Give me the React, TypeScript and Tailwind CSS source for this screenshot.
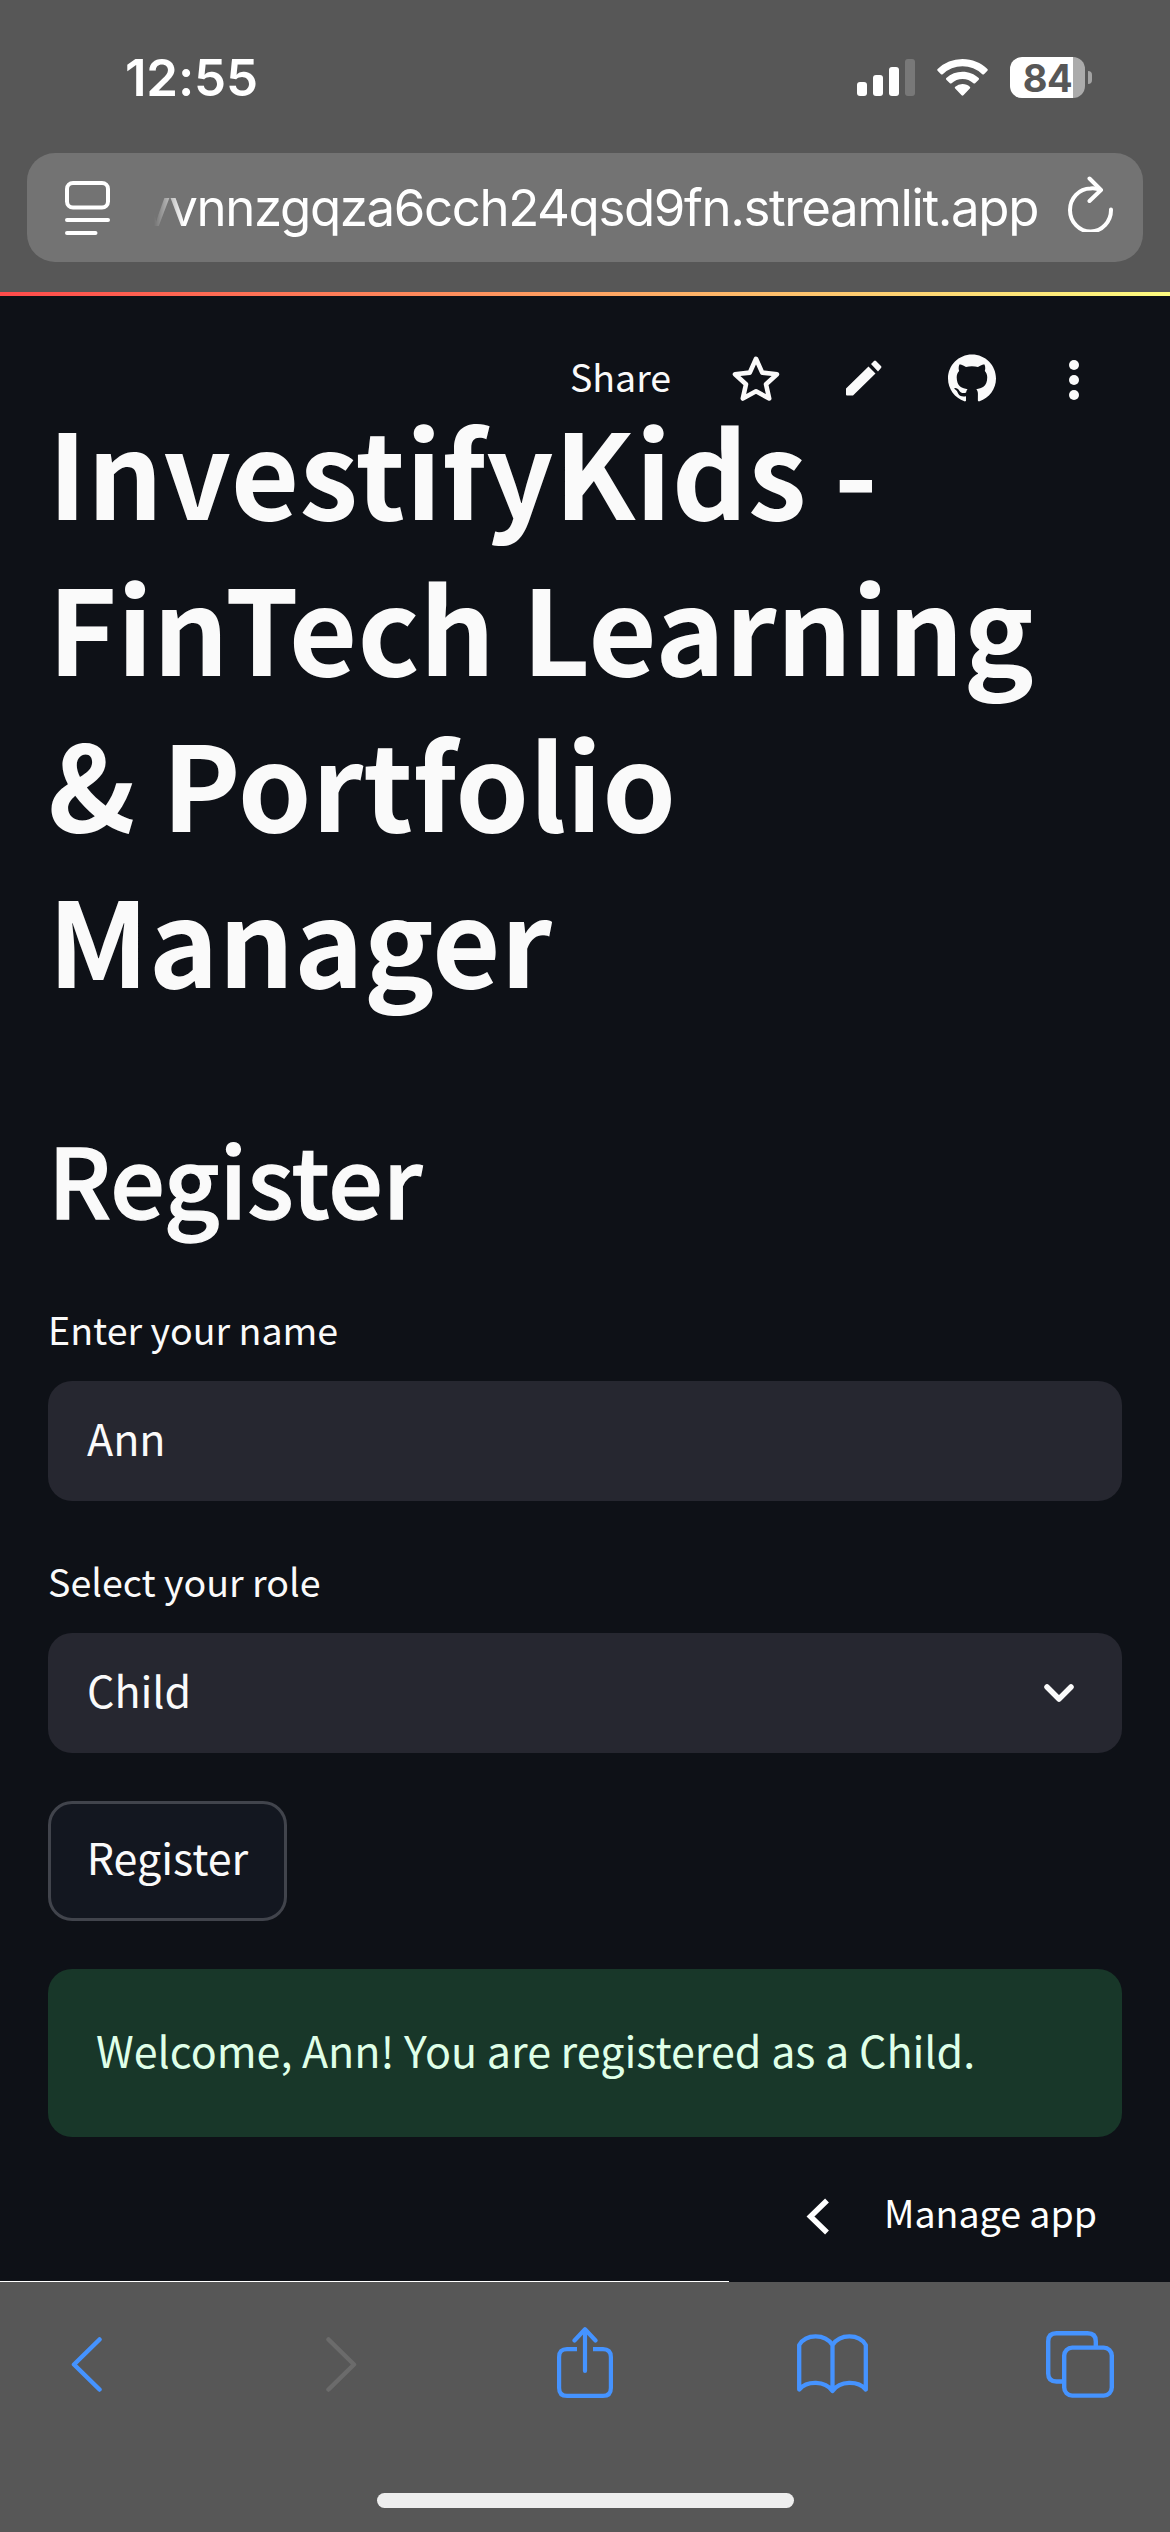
import type { ReactNode } from "react";
import { SiGithub } from "react-icons/si";

const SANS = "font-['Noto_Sans_CJK_SC','Liberation_Sans',sans-serif]";

function StatusBar() {
  return (
    <div className="flex h-[153px] items-start justify-between pl-[125px] pr-[78px]">
      <span className="mt-[47px] text-[51px] leading-[62px] font-semibold tracking-[-0.2px] text-white">
        12:55
      </span>
      <div className="mt-[57px] flex items-start">
        <svg className="mt-[2px]" width="58" height="37" viewBox="0 0 58 37" fill="#fff">
          <rect x="0" y="23" width="10" height="14" rx="3" />
          <rect x="16" y="16" width="10" height="21" rx="3" />
          <rect x="32" y="8" width="10" height="29" rx="3" />
          <rect x="48" y="0" width="10" height="37" rx="3" opacity="0.2" />
        </svg>
        <svg className="mt-[2px] ml-[22px]" width="51" height="37" viewBox="0 0 51 37" fill="#fff">
          <path d="M25.5 0C35.2 0 44 3.800 50.400 10Q51.200 10.800 50.400 11.700L47 15.200Q46.200 16 45.300 15.200A28.500 28.500 0 0 0 5.700 15.200Q4.800 16 4 15.200L.6 11.700Q-.2 10.800.6 10A36 36 0 0 1 25.500 0Z" />
          <path d="M25.500 12.700C31.800 12.700 37.500 15.100 41.700 19Q42.500 19.900 41.700 20.700L38.100 24.200Q37.300 25 36.400 24.200A16 16 0 0 0 14.600 24.200Q13.700 25 12.900 24.200L9.300 20.700Q8.500 19.900 9.300 19A24 24 0 0 1 25.500 12.700Z" />
          <path d="M25.500 25C28.500 25 31 26 32.800 27.700Q33.700 28.600 32.800 29.500L26.400 36.300Q25.500 37.200 24.600 36.300L18.200 29.500Q17.300 28.600 18.200 27.700A11 11 0 0 1 25.500 25Z" />
        </svg>
        <div className="ml-[22px] flex items-center">
          <div className="flex h-[41px] w-[75px] items-center justify-center rounded-[12px] bg-linear-to-r from-white from-84% to-[#ababab] to-84% text-[38px] leading-none font-bold tracking-[-0.5px] text-[#575757]">
            84
          </div>
          <div className="ml-[3px] h-[13px] w-[4px] rounded-r-full bg-[#a3a3a3]" />
        </div>
      </div>
    </div>
  );
}

function AddressBar() {
  return (
    <div className="mx-[27px] flex h-[109px] items-center rounded-[28px] bg-[#737373] pl-[38px] pr-[29px] text-white">
      <svg width="45" height="54" viewBox="0 0 45 54" fill="none" stroke="#fff" strokeWidth="4" strokeLinecap="round">
        <rect x="2" y="2" width="41" height="24.500" rx="6" />
        <path d="M2 39h41M2 52h28.500" />
      </svg>
      <div className="ml-[44px] flex w-[884px] justify-end overflow-hidden text-[51px] leading-[66px] whitespace-nowrap mask-[linear-gradient(to_right,transparent,#000_30px)]">
        <span className="tracking-[-1.4px]">vvnnzgqza6cch24qsd9fn.streamlit.app</span>
      </div>
      <svg className="mt-[-7px] ml-auto" width="46" height="56" viewBox="0 0 46 56" fill="none" stroke="#fff" strokeWidth="4" strokeLinecap="round" strokeLinejoin="round">
        <path d="M43 33.500A20.500 21.500 0 1 1 22.500 12.500C26 12 29 12.500 32.500 14" />
        <path d="M21.500 2.500L33 14L21.500 25" />
      </svg>
    </div>
  );
}

function AppHeader() {
  return (
    <header className="flex h-[164px] items-center pl-[570px] text-[#fafafa]">
      <span className="w-[104px] pb-1 text-[37.500px] leading-[60px]">Share</span>
      <svg className="ml-[58px]" width="48" height="46" viewBox="0 0 48 46" fill="none" stroke="currentColor" strokeWidth="4.600" strokeLinejoin="round">
        <path d="M24 3.800L30.200 17.600L45 19.200L34 29.200L37.200 43.500L24 36.200L10.800 43.500L14 29.200L3 19.200L17.800 17.600Z" />
      </svg>
      <svg className="ml-[65px]" width="38" height="36" viewBox="0 0 38 36" fill="currentColor">
        <path d="M1 28.500L23.500 6.500L30.500 13.500L8 35.500H2Q1 35.500 1 34.500ZM26 4L29 1Q30 .2 31 1L36 6Q37 7 36 8L33 11.500Z" />
      </svg>
      <SiGithub className="ml-[65px] size-[48px]" />
      <svg className="mt-1 ml-[73px]" width="10" height="40" viewBox="0 0 10 40" fill="currentColor">
        <circle cx="5" cy="5" r="5" />
        <circle cx="5" cy="20" r="5" />
        <circle cx="5" cy="35" r="5" />
      </svg>
    </header>
  );
}

function Field({ label, children }: { label: string; children: ReactNode }) {
  return (
    <div>
      <div className="text-[37.600px] leading-[60px]">{label}</div>
      <div className="mt-[22px] flex h-[120px] items-center justify-between rounded-3xl bg-[#262730] pr-12 pb-2 pl-[39px] text-[43px] leading-[60px]">
        {children}
      </div>
    </div>
  );
}

function Toolbar() {
  return (
    <nav className="flex h-[250px] flex-col items-center bg-[#575757]">
      <div className="flex h-[211px] w-full items-start pt-[45px] text-[#4593ff]">
        <svg className="mt-[10px] ml-[71px]" width="32" height="55" viewBox="0 0 32 55" fill="none" stroke="currentColor" strokeWidth="4.500" strokeLinecap="round" strokeLinejoin="round">
          <path d="M28.500 2.500L3 27.500L28.500 52.500" />
        </svg>
        <svg className="mt-[10px] ml-[222px]" width="32" height="55" viewBox="0 0 32 55" fill="none" stroke="#6b6b6b" strokeWidth="4.500" strokeLinecap="round" strokeLinejoin="round">
          <path d="M3.500 2.500L29 27.500L3.500 52.500" />
        </svg>
        <svg className="ml-[200px]" width="56" height="71" viewBox="0 0 56 71" fill="none" stroke="currentColor" strokeWidth="4.200">
          <path d="M20 22.100H10Q2.100 22.100 2.100 30V61Q2.100 68.900 10 68.900H46Q53.900 68.900 53.900 61V30Q53.900 22.100 46 22.100H36" />
          <path d="M28 44V2.500M17.500 13.500L28 2.300L38.500 13.500" strokeLinecap="round" strokeLinejoin="round" />
        </svg>
        <svg className="mt-[7px] ml-[184px]" width="71" height="60" viewBox="0 0 71 60" fill="none" stroke="currentColor" strokeWidth="4.300" strokeLinecap="round" strokeLinejoin="round">
          <path d="M35.500 11C28 -.5 9 -.5 2.200 11V55.500C10 46.500 28 46.500 35.500 57C43 46.500 61 46.500 68.800 55.500V11C62 -.5 43 -.5 35.500 11ZV56" />
        </svg>
        <svg className="mt-[4px] ml-[178px]" width="68" height="67" viewBox="0 0 68 67" fill="none" stroke="currentColor" strokeWidth="4.400">
          <path d="M16 50.500H10.500Q2.200 50.500 2.200 42.500V10.200Q2.200 2.200 10.500 2.200H41.500Q49.800 2.200 49.800 10.200V15" />
          <rect x="18.200" y="16.600" width="47.600" height="48" rx="8" />
        </svg>
      </div>
      <div className="h-[15px] w-[417px] rounded-full bg-[#eee]" />
    </nav>
  );
}

export default function App() {
  return (
    <div className="h-[2532px] w-[1170px] overflow-hidden bg-[#0e1117] font-[Inter,sans-serif]">
      <div className="h-[292px] bg-[#575757]">
        <StatusBar />
        <AddressBar />
      </div>
      <div className="h-1 bg-linear-to-r/srgb from-[#ff4b4b] via-[#ffa262] to-[#fffd80]" />

      <div className={`${SANS} flex h-[1986px] flex-col text-[#fafafa]`}>
        <AppHeader />
        <main className="-mt-[69px] px-12">
          <h1 className="text-[118px] leading-[156px] font-bold whitespace-nowrap">
            <span className="tracking-[0.35px]">InvestifyKids -</span>
            <br />
            FinTech Learning
            <br />
            &amp; Portfolio
            <br />
            Manager
          </h1>
          <h2 className="mt-[104px] mb-[64px] text-[96.500px] leading-[116px] font-medium [-webkit-text-stroke:1.4px_currentColor]">
            Register
          </h2>
          <div className="flex flex-col gap-[50px]">
            <Field label="Enter your name">Ann</Field>
            <Field label="Select your role">
              <span>Child</span>
              <svg className="mt-2" width="30" height="18" viewBox="0 0 30 18" fill="none" stroke="currentColor" strokeWidth="5.500" strokeLinecap="round" strokeLinejoin="round">
                <path d="M3 3L15 15L27 3" />
              </svg>
            </Field>
          </div>
          <button className="mt-12 flex h-[120px] w-[239px] items-center justify-center rounded-3xl border-3 border-[#41444c] bg-[#131720] pb-[10px] text-[43px] leading-[60px]">
            Register
          </button>
          <div className="mt-12 flex h-[168px] items-center rounded-3xl bg-[#183729] pb-2 pl-12 text-[43px] leading-[60px] text-[#dfffe8]">
            Welcome, Ann! You are registered as a Child.
          </div>
        </main>
        <div className="mt-auto flex h-[139px] items-center justify-end pr-[73px] text-white">
          <svg className="mt-[9px]" width="24" height="37" viewBox="0 0 24 37" fill="none" stroke="currentColor" strokeWidth="5.500">
            <path d="M21 2.500L4.500 18.500L21 34.500" />
          </svg>
          <span className="ml-[54px] text-[37.500px] leading-[60px]">Manage app</span>
        </div>
        <div className="h-px w-[729px] shrink-0 bg-white" />
      </div>
      <Toolbar />
    </div>
  );
}
